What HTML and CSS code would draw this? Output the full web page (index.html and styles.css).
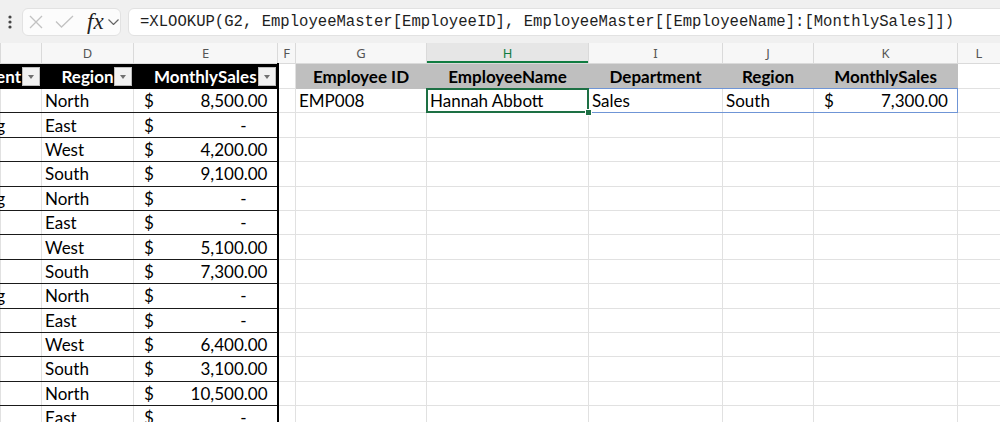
FILE: index.html
```html
<!DOCTYPE html>
<html lang="en">
<head>
    <meta charset="UTF-8">
    <meta name="viewport" content="width=device-width, initial-scale=1.0">
    <title>XLOOKUP</title>
    <link rel="stylesheet" href="styles.css">
</head>
<body>
    <div class="formula-bar">
        <svg class="grip" width="4" height="14" viewBox="0 0 4 14"><circle cx="2" cy="2" r="1.6"/><circle cx="2" cy="7" r="1.6"/><circle cx="2" cy="12" r="1.6"/></svg>
        <div class="fx-box">
            <svg class="icon cancel" width="14" height="14" viewBox="0 0 14 14"><path d="M1 1 L13 13 M13 1 L1 13"/></svg>
            <svg class="icon enter" width="19" height="13" viewBox="0 0 19 13"><path d="M1 6.5 L6.5 12 L18 1"/></svg>
            <span class="fx">fx</span>
            <svg class="chevron" width="11" height="6" viewBox="0 0 11 6"><path d="M0.5 0.5 L5.5 5.5 L10.5 0.5"/></svg>
        </div>
        <div class="formula">=XLOOKUP(G2, EmployeeMaster[EmployeeID], EmployeeMaster[[EmployeeName]:[MonthlySales]])</div>
    </div>

    <table class="sheet">
        <colgroup>
            <col class="w-c"><col class="w-d"><col class="w-e"><col class="w-f"><col class="w-g">
            <col class="w-h"><col class="w-i"><col class="w-j"><col class="w-k"><col class="w-l">
        </colgroup>
        <tr class="heads">
            <th></th><th>D</th><th>E</th><th>F</th><th>G</th><th class="on">H</th><th>I</th><th>J</th><th>K</th><th>L</th>
        </tr>
        <tr class="hdr">
            <td class="dark"><div class="cut pad-dd">Department</div><span class="dd"></span></td>
            <td class="dark">Region<span class="dd"></span></td>
            <td class="dark edge">MonthlySales<span class="dd"></span></td>
            <td></td>
            <td class="grey">Employee ID</td>
            <td class="grey">EmployeeName</td>
            <td class="grey">Department</td>
            <td class="grey">Region</td>
            <td class="grey">MonthlySales</td>
            <td></td>
        </tr>
        <tr>
            <td class="tb"></td><td class="tb">North</td>
            <td class="tb edge"><div class="acct"><span>$</span><span>8,500.00</span></div></td>
            <td></td>
            <td>EMP008</td>
            <td class="active">Hannah Abbott<span class="handle"></span></td>
            <td>Sales</td>
            <td>South</td>
            <td><div class="acct"><span>$</span><span>7,300.00</span></div></td>
            <td></td>
        </tr>
        <tr>
            <td class="tb"><div class="cut">Marketing</div></td><td class="tb">East</td>
            <td class="tb edge"><div class="acct"><span>$</span><span class="dash">-</span></div></td>
            <td></td><td></td><td></td><td></td><td></td><td></td><td></td>
        </tr>
        <tr>
            <td class="tb"></td><td class="tb">West</td>
            <td class="tb edge"><div class="acct"><span>$</span><span>4,200.00</span></div></td>
            <td></td><td></td><td></td><td></td><td></td><td></td><td></td>
        </tr>
        <tr>
            <td class="tb"></td><td class="tb">South</td>
            <td class="tb edge"><div class="acct"><span>$</span><span>9,100.00</span></div></td>
            <td></td><td></td><td></td><td></td><td></td><td></td><td></td>
        </tr>
        <tr>
            <td class="tb"><div class="cut">Marketing</div></td><td class="tb">North</td>
            <td class="tb edge"><div class="acct"><span>$</span><span class="dash">-</span></div></td>
            <td></td><td></td><td></td><td></td><td></td><td></td><td></td>
        </tr>
        <tr>
            <td class="tb"></td><td class="tb">East</td>
            <td class="tb edge"><div class="acct"><span>$</span><span class="dash">-</span></div></td>
            <td></td><td></td><td></td><td></td><td></td><td></td><td></td>
        </tr>
        <tr>
            <td class="tb"></td><td class="tb">West</td>
            <td class="tb edge"><div class="acct"><span>$</span><span>5,100.00</span></div></td>
            <td></td><td></td><td></td><td></td><td></td><td></td><td></td>
        </tr>
        <tr>
            <td class="tb"></td><td class="tb">South</td>
            <td class="tb edge"><div class="acct"><span>$</span><span>7,300.00</span></div></td>
            <td></td><td></td><td></td><td></td><td></td><td></td><td></td>
        </tr>
        <tr>
            <td class="tb"><div class="cut">Marketing</div></td><td class="tb">North</td>
            <td class="tb edge"><div class="acct"><span>$</span><span class="dash">-</span></div></td>
            <td></td><td></td><td></td><td></td><td></td><td></td><td></td>
        </tr>
        <tr>
            <td class="tb"></td><td class="tb">East</td>
            <td class="tb edge"><div class="acct"><span>$</span><span class="dash">-</span></div></td>
            <td></td><td></td><td></td><td></td><td></td><td></td><td></td>
        </tr>
        <tr>
            <td class="tb"></td><td class="tb">West</td>
            <td class="tb edge"><div class="acct"><span>$</span><span>6,400.00</span></div></td>
            <td></td><td></td><td></td><td></td><td></td><td></td><td></td>
        </tr>
        <tr>
            <td class="tb"></td><td class="tb">South</td>
            <td class="tb edge"><div class="acct"><span>$</span><span>3,100.00</span></div></td>
            <td></td><td></td><td></td><td></td><td></td><td></td><td></td>
        </tr>
        <tr>
            <td class="tb"></td><td class="tb">North</td>
            <td class="tb edge"><div class="acct"><span>$</span><span>10,500.00</span></div></td>
            <td></td><td></td><td></td><td></td><td></td><td></td><td></td>
        </tr>
        <tr>
            <td class="tb"></td><td class="tb">East</td>
            <td class="tb edge"><div class="acct"><span>$</span><span class="dash">-</span></div></td>
            <td></td><td></td><td></td><td></td><td></td><td></td><td></td>
        </tr>
    </table>
</body>
</html>
```

FILE: styles.css
```css
body {
    margin: 0;
    background-color: #fff;
    font-family: Lato, "Liberation Sans", sans-serif;
    overflow: hidden;
}

/* formula bar */
.formula-bar {
    display: flex;
    align-items: center;
    height: 43px;
    padding-left: 8px;
    background-color: #f0f0f0;
    overflow: hidden;
}
.grip {
    fill: #454545;
    margin-right: 10px;
}
.fx-box {
    display: flex;
    align-items: center;
    box-sizing: border-box;
    width: 99px;
    height: 28px;
    padding-left: 6px;
    background-color: #fcfcfc;
    border: 1px solid #e2e2e2;
    border-radius: 6px;
}
.icon {
    fill: none;
    stroke: #c2c2c2;
    stroke-width: 1.3;
}
.enter {
    margin-left: 12px;
}
.fx {
    margin-left: 13px;
    font-family: "Liberation Serif", serif;
    font-style: italic;
    font-size: 23px;
    line-height: 20px;
    color: #222;
}
.chevron {
    margin-left: 4px;
    fill: none;
    stroke: #666;
    stroke-width: 1.2;
}
.formula {
    flex: 1;
    box-sizing: border-box;
    height: 28px;
    margin-left: 7px;
    margin-right: -10px;
    padding-left: 11px;
    background-color: #fff;
    border: 1px solid #e2e2e2;
    border-radius: 6px;
    font-family: "Liberation Mono", monospace;
    font-size: 15.6px;
    line-height: 26px;
    color: #1e1e1e;
    white-space: nowrap;
}

/* grid */
.sheet {
    border-collapse: collapse;
    table-layout: fixed;
    width: 1000px;
}
.w-c { width: 41px; }
.w-d { width: 92px; }
.w-e { width: 144px; }
.w-f { width: 18px; }
.w-g { width: 131px; }
.w-h { width: 162px; }
.w-i { width: 134px; }
.w-j { width: 91px; }
.w-k { width: 144px; }
.w-l { width: 43px; }

.heads th {
    height: 20px;
    padding: 0;
    background-color: #f7f7f7;
    border: 1px solid #dadada;
    border-top: none;
    font-family: "Noto Sans", sans-serif;
    font-weight: 400;
    font-size: 13px;
    color: #555;
}
.heads th.on {
    background-color: #e6e6e6;
    box-shadow: inset 0 -2px #107c41;
    color: #107c41;
}

.sheet td {
    height: 23.4px;
    padding: 0 3px;
    border: 1px solid #e1e1e1;
    font-size: 17px;
    color: #000;
    white-space: nowrap;
}
.hdr td {
    height: 24px;
}
.sheet td.dark {
    position: relative;
    background-color: #000;
    border-color: #000;
    color: #fff;
    font-weight: 700;
    text-align: center;
}
.sheet td.grey {
    background-color: #bfbfbf;
    border-color: #bfbfbf;
    font-weight: 700;
    text-align: center;
}
.sheet td.tb {
    border-bottom-color: #1a1a1a;
}
.sheet td.edge {
    border-right: 2px solid #000;
}

.cut {
    display: flex;
    justify-content: flex-end;
    padding-right: 33px;
}
.cut.pad-dd {
    padding-right: 17px;
}
.dd {
    position: absolute;
    right: 1px;
    top: 3px;
    box-sizing: border-box;
    width: 18px;
    height: 19px;
    background-color: #f2f2f2;
    border: 1px solid #bdbdbd;
}
.dd::after {
    content: "";
    position: absolute;
    left: 5px;
    top: 7px;
    border-left: 3.5px solid transparent;
    border-right: 3.5px solid transparent;
    border-top: 4px solid #707070;
}

.acct {
    display: flex;
    justify-content: space-between;
    padding: 0 6px 0 7px;
}
.acct .dash {
    padding-right: 21px;
}

/* selection and spill outline */
.active {
    position: relative;
}
.active::before {
    content: "";
    position: absolute;
    left: -1px;
    top: -1px;
    bottom: -1px;
    width: 532px;
    border: 1px solid #6f95d6;
    box-sizing: border-box;
}
.active::after {
    content: "";
    position: absolute;
    left: -1px;
    top: -1px;
    right: -1px;
    bottom: -1px;
    border: 2px solid #1d7044;
}
.handle {
    position: absolute;
    right: -4px;
    bottom: -4px;
    z-index: 1;
    width: 5px;
    height: 5px;
    background-color: #1d7044;
    border: 1px solid #fff;
}
```
